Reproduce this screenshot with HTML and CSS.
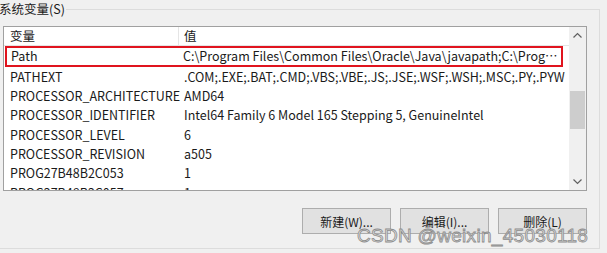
FILE: index.html
```html
<!DOCTYPE html>
<html lang="zh-CN">
<head>
  <meta charset="UTF-8">
  <title>系统变量</title>
  <link rel="stylesheet" href="styles.css">
</head>
<body>

<fieldset class="group">
  <legend>系统变量(S)</legend>

  <div class="listbox">
    <div class="list">
      <div class="row head">
        <div class="name">变量</div>
        <div class="value">值</div>
      </div>
      <div class="row selected">
        <div class="name">Path</div>
        <div class="value">C:\Program Files\Common Files\Oracle\Java\javapath;C:\Program Files (x86)\Common Files\Oracle\Java\javapath</div>
      </div>
      <div class="row">
        <div class="name">PATHEXT</div>
        <div class="value">.COM;.EXE;.BAT;.CMD;.VBS;.VBE;.JS;.JSE;.WSF;.WSH;.MSC;.PY;.PYW</div>
      </div>
      <div class="row">
        <div class="name">PROCESSOR_ARCHITECTURE</div>
        <div class="value">AMD64</div>
      </div>
      <div class="row">
        <div class="name">PROCESSOR_IDENTIFIER</div>
        <div class="value">Intel64 Family 6 Model 165 Stepping 5, GenuineIntel</div>
      </div>
      <div class="row">
        <div class="name">PROCESSOR_LEVEL</div>
        <div class="value">6</div>
      </div>
      <div class="row">
        <div class="name">PROCESSOR_REVISION</div>
        <div class="value">a505</div>
      </div>
      <div class="row">
        <div class="name">PROG27B48B2C053</div>
        <div class="value">1</div>
      </div>
      <div class="row">
        <div class="name">PROG27B48B2C057</div>
        <div class="value">1</div>
      </div>
    </div>

    <div class="scrollbar">
      <svg class="arrow" width="17" height="17" viewBox="0 0 17 17"><path d="M4.5 10.5 L8.5 6.5 L12.5 10.5" fill="none" stroke="#606060" stroke-width="1.2"/></svg>
      <div class="track">
        <div class="thumb"></div>
      </div>
      <svg class="arrow" width="17" height="17" viewBox="0 0 17 17"><path d="M4.5 6.5 L8.5 10.5 L12.5 6.5" fill="none" stroke="#606060" stroke-width="1.2"/></svg>
    </div>
  </div>

  <div class="buttons">
    <button>新建(W)...</button>
    <button>编辑(I)...</button>
    <button>删除(L)</button>
  </div>

  <div class="watermark">CSDN @weixin_45030118</div>
</fieldset>

</body>
</html>
```

FILE: styles.css
```css
html, body {
  margin: 0;
  padding: 0;
}
body {
  width: 607px;
  height: 253px;
  overflow: hidden;
  background-color: #f0f0f0;
  font-family: "Noto Sans CJK SC", "Noto Sans", sans-serif;
  font-size: 12.5px;
  color: #1a1a1a;
}
.group {
  position: relative;
  min-width: 0;
  margin: 0 7px 0 -12px;
  padding: 0 12px 0 14px;
  height: 247px;
  border: 1px solid #dcdcdc;
}
.group legend {
  padding: 0 1px;
  margin-left: -5px;
  line-height: 18px;
  font-size: 12.5px;
  color: #1a1a1a;
}
.listbox {
  display: flex;
  margin-top: 8px;
  height: 163px;
  border: 1px solid #a0a0a0;
  background-color: #fff;
}
.list {
  flex: 1;
  min-width: 0;
  overflow: hidden;
}
.row {
  display: flex;
  height: 19.35px;
  line-height: 19px;
  white-space: nowrap;
}
.row .name {
  width: 168px;
  padding-left: 6px;
  flex: none;
}
.row .value {
  flex: 1;
  min-width: 0;
  padding-left: 6px;
  overflow: hidden;
  text-overflow: ellipsis;
}
.head {
  height: 18px;
  line-height: 18px;
  border-bottom: 1px solid #e5e5e5;
}
.head .name {
  border-right: 1px solid #e5e5e5;
}
.head .value {
  padding-left: 5px;
}
.selected {
  box-sizing: border-box;
  margin: 0 6px 0 1px;
  height: 20.5px;
  line-height: 16px;
  border: 2px solid #e0141e;
}
.selected .name {
  width: 166px;
  padding-left: 4px;
}
.selected .value {
  padding-right: 3px;
}
.scrollbar {
  width: 17px;
  flex: none;
  display: flex;
  flex-direction: column;
  background-color: #f0f0f0;
}
.arrow {
  display: block;
  flex: none;
}
.track {
  flex: 1;
  padding-top: 47px;
}
.thumb {
  margin: 0 1px;
  height: 38px;
  background-color: #cdcdcd;
}
.buttons {
  display: flex;
  justify-content: flex-end;
  gap: 9px;
  margin-top: 17px;
}
button {
  width: 89px;
  height: 26px;
  padding: 0;
  font-family: inherit;
  font-size: 12px;
  color: #1a1a1a;
  background-color: #e1e1e1;
  border: 1px solid #adadad;
}
.watermark {
  position: absolute;
  left: 368px;
  top: 207px;
  font-family: "Liberation Sans", Arial, sans-serif;
  font-size: 19px;
  letter-spacing: 0.3px;
  color: #e0e0e0;
  -webkit-text-stroke: 0.8px #8c8c8c;
}
```
